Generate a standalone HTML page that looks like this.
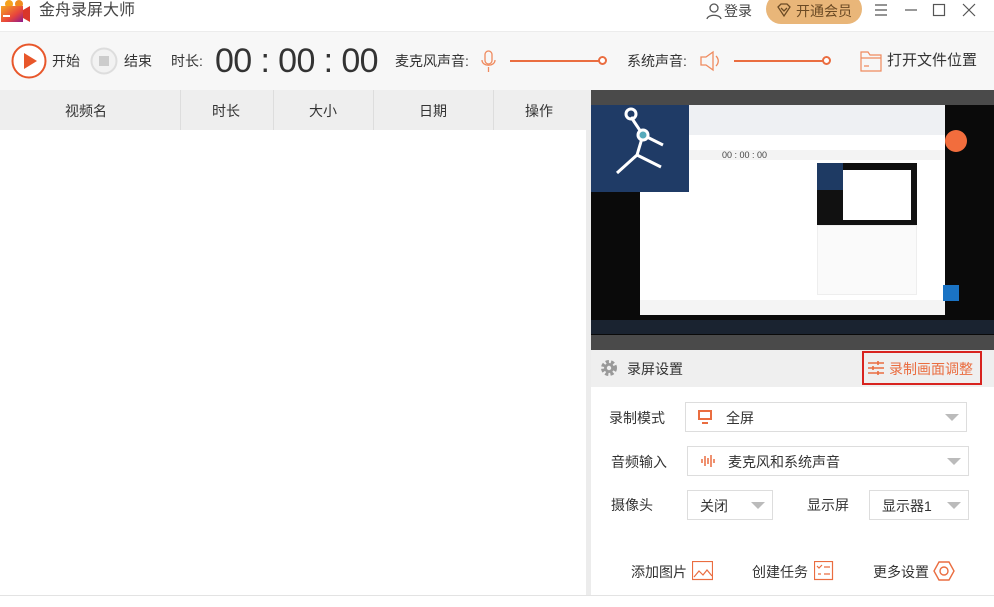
<!DOCTYPE html>
<html><head><meta charset="utf-8"><style>
*{margin:0;padding:0;box-sizing:border-box}
body{width:994px;height:607px;overflow:hidden;background:#fff;font-family:"Liberation Sans","Noto Sans CJK SC",sans-serif;color:#333;position:relative;font-size:14px;line-height:1}
.a{position:absolute}
.t{white-space:nowrap}
</style></head><body>
<div class="a" style="left:0;top:0;width:994px;height:31px;background:#fff"></div>
<svg class="a" style="left:1px;top:0" width="30" height="24"><defs><linearGradient id="g" x1="0" y1="0" x2="1" y2="1"><stop offset="0" stop-color="#f5a623"/><stop offset=".6" stop-color="#e8453c"/><stop offset="1" stop-color="#8e1b8f"/></linearGradient></defs><circle cx="8" cy="4" r="4" fill="#f6a21e"/><circle cx="18" cy="4" r="4" fill="#f08a1e"/><rect x="0" y="6" width="22" height="16" fill="url(#g)"/><path d="M22 10 L29 6 L29 22 L22 18Z" fill="#d9362a"/><rect x="2" y="15" width="7" height="2" fill="#fff"/></svg>
<div class="a t" style="left:39px;top:3px;font-size:16px;color:#444">金舟录屏大师</div>
<svg class="a" style="left:705px;top:2px" width="18" height="18" fill="none" stroke="#555" stroke-width="1.3"><circle cx="9" cy="6" r="4"/><path d="M2 17c1-5 13-5 14 0"/></svg>
<div class="a t" style="left:724px;top:4px;font-size:14px;color:#444">登录</div>
<div class="a" style="left:766px;top:-6px;width:96px;height:30px;border-radius:15px;background:#e9b679"></div>
<svg class="a" style="left:776px;top:2px" width="16" height="16" fill="none" stroke="#6b4a24" stroke-width="1.3"><path d="M2 5 L5 2 L11 2 L14 5 L8 14Z M5 6 L8 9 L11 6"/></svg>
<div class="a t" style="left:796px;top:4px;font-size:14px;color:#6b4a24">开通会员</div>
<svg class="a" style="left:874px;top:3px" width="110" height="14" fill="none" stroke="#555" stroke-width="1.2"><path d="M1 2h12M1 7h12M1 12h12"/><path d="M31 7h12"/><rect x="59.5" y="1.5" width="11" height="11"/><path d="M89 1l12 12M101 1L89 13"/></svg>
<div class="a" style="left:0;top:31px;width:994px;height:59px;background:#f7f7f7;border-top:1px solid #ececec"></div>
<svg class="a" style="left:11px;top:43px" width="36" height="36"><circle cx="18" cy="18" r="16.5" fill="#fff" stroke="#e8572b" stroke-width="2"/><path d="M13 10 L26 18 L13 26Z" fill="#e8572b"/></svg>
<div class="a t" style="left:52px;top:54px">开始</div>
<svg class="a" style="left:90px;top:47px" width="28" height="28"><circle cx="14" cy="14" r="12.5" fill="#f2f2f2" stroke="#ddd" stroke-width="2"/><rect x="9" y="9" width="10" height="10" fill="#ccc"/></svg>
<div class="a t" style="left:124px;top:54px">结束</div>
<div class="a t" style="left:171px;top:54px">时长:</div>
<div class="a t" style="left:215px;top:44px;font-size:34px;color:#333;letter-spacing:-0.6px">00 : 00 : 00</div>
<div class="a t" style="left:395px;top:54px">麦克风声音:</div>
<svg class="a" style="left:481px;top:50px" width="16" height="24" fill="none" stroke="#ef8a5e" stroke-width="1.3"><rect x="4" y="1" width="7" height="13" rx="3.5"/><path d="M1 10c0 7 13 7 13 0M7.5 17v5"/></svg>
<div class="a" style="left:510px;top:60px;width:90px;height:2px;background:#ea6d40"></div>
<div class="a" style="left:598px;top:56px;width:9px;height:9px;border:2px solid #ea6d40;border-radius:50%;background:#fff"></div>
<div class="a t" style="left:627px;top:54px">系统声音:</div>
<svg class="a" style="left:700px;top:50px" width="22" height="22" fill="none" stroke="#ef8a5e" stroke-width="1.3"><path d="M1 7h5l7-5v18l-7-5H1Z"/><path d="M16 6c3 3 3 7 0 10"/></svg>
<div class="a" style="left:734px;top:60px;width:90px;height:2px;background:#ea6d40"></div>
<div class="a" style="left:822px;top:56px;width:9px;height:9px;border:2px solid #ea6d40;border-radius:50%;background:#fff"></div>
<svg class="a" style="left:860px;top:50px" width="22" height="22" fill="none" stroke="#ef8a5e" stroke-width="1.2"><path d="M1 2h7l2 3h11v16H1Z M1 8h20 M4 16h5"/></svg>
<div class="a t" style="left:887px;top:53px;font-size:15px">打开文件位置</div>
<div class="a" style="left:0;top:90px;width:591px;height:40px;background:#eeeeee"></div>
<div class="a" style="left:180px;top:90px;width:1px;height:40px;background:#ddd"></div>
<div class="a" style="left:273px;top:90px;width:1px;height:40px;background:#ddd"></div>
<div class="a" style="left:373px;top:90px;width:1px;height:40px;background:#ddd"></div>
<div class="a" style="left:493px;top:90px;width:1px;height:40px;background:#ddd"></div>
<div class="a t" style="left:65px;top:104px">视频名</div>
<div class="a t" style="left:212px;top:104px">时长</div>
<div class="a t" style="left:309px;top:104px">大小</div>
<div class="a t" style="left:419px;top:104px">日期</div>
<div class="a t" style="left:525px;top:104px">操作</div>
<div class="a" style="left:586px;top:130px;width:5px;height:465px;background:#ececec"></div>
<div class="a" style="left:0;top:595px;width:994px;height:1px;background:#e3e3e3"></div>
<div class="a" style="left:591px;top:90px;width:403px;height:260px;background:#4a4a4a"></div>
<div class="a" style="left:591px;top:105px;width:403px;height:230px;background:#0a0a0a"></div>
<div class="a" style="left:640px;top:105px;width:305px;height:210px;background:#fff"></div>
<div class="a" style="left:640px;top:105px;width:305px;height:30px;background:#eef0f3"></div>
<div class="a" style="left:640px;top:150px;width:305px;height:10px;background:#f3f3f3"></div>
<div class="a t" style="left:722px;top:151px;font-size:9px;color:#444">00 : 00 : 00</div>
<div class="a" style="left:817px;top:163px;width:100px;height:62px;background:#111"></div>
<div class="a" style="left:843px;top:170px;width:68px;height:50px;background:#fff"></div>
<div class="a" style="left:817px;top:163px;width:26px;height:27px;background:#1e3a63"></div>
<div class="a" style="left:817px;top:225px;width:100px;height:70px;background:#fafafa;border:1px solid #eee"></div>
<div class="a" style="left:640px;top:300px;width:305px;height:15px;background:#f4f4f4"></div>
<div class="a" style="left:591px;top:105px;width:98px;height:87px;background:#1f3b66"></div>
<svg class="a" style="left:591px;top:105px" width="98" height="87" fill="none" stroke="#fff" stroke-width="3"><circle cx="40" cy="9" r="5"/><path d="M40 12l12 18M52 30l-6 20M46 50L26 68M46 50l24 12M52 30l20 10"/><circle cx="52" cy="30" r="5" fill="#5ab"/></svg>
<div class="a" style="left:945px;top:130px;width:22px;height:22px;border-radius:50%;background:#f26d3d"></div>
<div class="a" style="left:943px;top:285px;width:16px;height:16px;background:#1a73c4"></div>
<div class="a" style="left:591px;top:320px;width:403px;height:14px;background:#1a2330"></div>
<div class="a" style="left:591px;top:350px;width:403px;height:37px;background:#efefef"></div>
<svg class="a" style="left:600px;top:359px" width="18" height="18"><circle cx="9" cy="9" r="6" fill="none" stroke="#999" stroke-width="4" stroke-dasharray="3 2"/><circle cx="9" cy="9" r="5" fill="#999"/><circle cx="9" cy="9" r="2.2" fill="#efefef"/></svg>
<div class="a t" style="left:627px;top:362px">录屏设置</div>
<div class="a" style="left:862px;top:351px;width:120px;height:34px;border:2px solid #d8231f"></div>
<svg class="a" style="left:867px;top:360px" width="18" height="16" stroke="#ea6d40" stroke-width="1.6"><path d="M1 3h16M1 8h16M1 13h16"/><path d="M11 1v4M6 6v4M11 11v4"/></svg>
<div class="a t" style="left:889px;top:362px;color:#ea6d40">录制画面调整</div>
<div class="a" style="left:591px;top:387px;width:403px;height:208px;background:#fff"></div>
<div class="a t" style="left:609px;top:411px">录制模式</div>
<div class="a" style="left:685px;top:402px;width:282px;height:30px;border:1px solid #ddd"></div>
<svg class="a" style="left:698px;top:410px" width="14" height="14" fill="none" stroke="#ea6d40" stroke-width="2"><rect x="1" y="1" width="12" height="8"/><path d="M4 13h6"/></svg>
<div class="a t" style="left:726px;top:411px">全屏</div>
<div class="a" style="left:945px;top:414px;border:7px solid transparent;border-top:7px solid #bbb;border-bottom:0"></div>
<div class="a t" style="left:611px;top:455px">音频输入</div>
<div class="a" style="left:687px;top:446px;width:282px;height:30px;border:1px solid #ddd"></div>
<svg class="a" style="left:700px;top:453px" width="16" height="16" stroke="#ea6d40" stroke-width="1.5"><path d="M2 6v4M5 3v10M8 5v6M11 2v12M14 6v4"/></svg>
<div class="a t" style="left:728px;top:455px">麦克风和系统声音</div>
<div class="a" style="left:947px;top:458px;border:7px solid transparent;border-top:7px solid #bbb;border-bottom:0"></div>
<div class="a t" style="left:611px;top:498px">摄像头</div>
<div class="a" style="left:687px;top:490px;width:86px;height:30px;border:1px solid #ddd"></div>
<div class="a t" style="left:700px;top:499px">关闭</div>
<div class="a" style="left:751px;top:502px;border:7px solid transparent;border-top:7px solid #bbb;border-bottom:0"></div>
<div class="a t" style="left:807px;top:498px">显示屏</div>
<div class="a" style="left:869px;top:490px;width:100px;height:30px;border:1px solid #ddd"></div>
<div class="a t" style="left:882px;top:499px">显示器1</div>
<div class="a" style="left:947px;top:502px;border:7px solid transparent;border-top:7px solid #bbb;border-bottom:0"></div>
<div class="a t" style="left:631px;top:565px">添加图片</div>
<svg class="a" style="left:692px;top:561px" width="21" height="20" fill="none" stroke="#ea6d40" stroke-width="1.2"><rect x=".5" y=".5" width="20" height="18"/><path d="M2 16l5-6 4 4 4-5 5 6"/></svg>
<div class="a t" style="left:752px;top:565px">创建任务</div>
<svg class="a" style="left:814px;top:561px" width="20" height="20" fill="none" stroke="#ea6d40" stroke-width="1.2"><rect x=".5" y=".5" width="18" height="18"/><path d="M3 5l2 2 3-3M10 6h6M4 13h3M10 13h6"/></svg>
<div class="a t" style="left:873px;top:565px">更多设置</div>
<svg class="a" style="left:933px;top:560px" width="22" height="22" fill="none" stroke="#ea6d40" stroke-width="1.4"><path d="M6 2h10l5 9-5 9H6l-5-9Z"/><circle cx="11" cy="11" r="4"/></svg>
<div class="a" style="left:0;top:596px;width:994px;height:11px;background:#fff"></div>
</body></html>
